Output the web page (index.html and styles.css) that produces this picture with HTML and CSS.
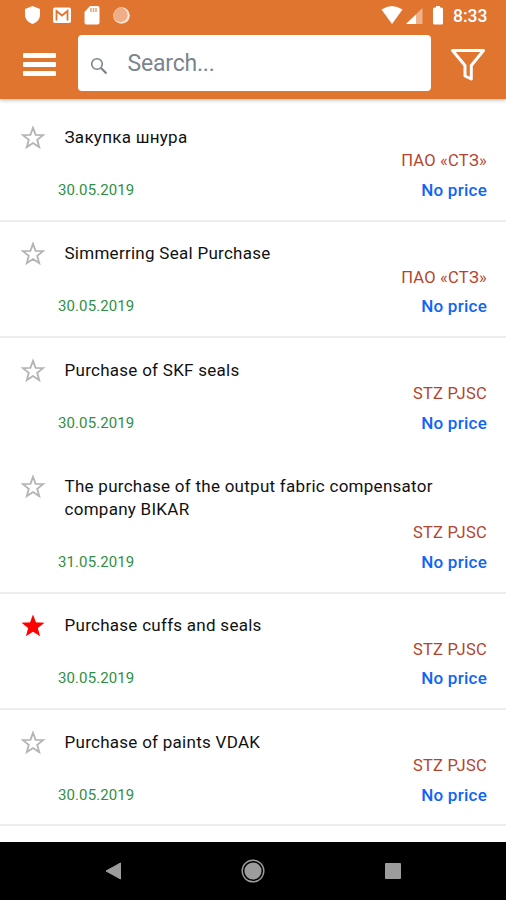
FILE: index.html
```
<!DOCTYPE html>
<html lang="en">
<head>
  <meta charset="UTF-8">
  <meta name="viewport" content="width=device-width, initial-scale=1.0">
  <title>Purchases</title>
  <link rel="stylesheet" href="styles.css">
</head>
<body>

<!-- Shared star shape -->
<svg class="defs" width="0" height="0">
  <symbol id="star" viewBox="0 0 24 24">
    <path d="M12 2.700L14.400 9.100L21.300 9.400L15.900 13.700L17.700 20.400L12 16.600L6.300 20.400L8.100 13.700L2.700 9.400L9.600 9.100z"/>
  </symbol>
</svg>

<div class="app">
  <header class="header">
    <!-- Status bar -->
    <div class="status">
      <svg class="notifications" width="110" height="30" viewBox="0 0 110 30">
        <path fill="#fff" d="M12.500 6l7.500 3v5.500c0 4.500-3 8-7.500 9.500-4.500-1.500-7.500-5-7.500-9.500V9z"/>
        <rect x="33" y="7.500" width="18" height="15.500" rx="2" fill="#fff"/>
        <path fill="none" stroke="#e07530" stroke-width="1.800" d="M36.500 20.500V11l5.500 4.500 5.500-4.500v9.500"/>
        <path fill="#fff" d="M70 6h7.500q2 0 2 2v14.500q0 2-2 2h-11q-2 0-2-2V12z"/>
        <path stroke="#e8a06e" stroke-width="1.500" d="M71 8v4M73.500 8v4M76 8v4"/>
        <circle cx="101.500" cy="15.500" r="8.300" fill="#fbe6d9"/>
        <circle cx="100.500" cy="15" r="7.200" fill="#efae88"/>
      </svg>
      <svg class="signals" width="66" height="30" viewBox="0 0 66 30">
        <path fill="#fff" d="M1.500 9.500Q12 2.500 22.500 9.500L12 24z"/>
        <path fill="#efb28c" d="M42.500 8v16H26z"/>
        <path fill="#fff" d="M36 14.500V24H26z"/>
        <path fill="#fff" d="M56 6h4v1.500h1.500q1.500 0 1.500 1.500v14q0 1.500-1.500 1.500h-7q-1.500 0-1.500-1.500V9q0-1.500 1.500-1.500H56z"/>
      </svg>
      <span class="clock">8:33</span>
    </div>
    <!-- Search bar -->
    <div class="toolbar">
      <div class="menu"><span></span><span></span><span></span></div>
      <div class="search">
        <svg width="18" height="18" viewBox="0 0 18 18" fill="none" stroke="#7a838b">
          <circle cx="7" cy="7" r="5.300" stroke-width="1.600"/>
          <path stroke-width="2.200" d="M11 11l5.500 5.500"/>
        </svg>
        <span class="placeholder">Search...</span>
      </div>
      <svg class="filter" width="36" height="34" viewBox="0 0 36 34" fill="none" stroke="#fff" stroke-width="3" stroke-linejoin="round">
        <path d="M2.500 2.500h31L21.300 17.500v13.500l-6.300-3v-10.500z"/>
      </svg>
    </div>
  </header>

  <!-- Purchase list -->
  <main class="list">
    <div class="item">
      <svg class="star"><use href="#star"/></svg>
      <div class="title">Закупка шнура</div>
      <div class="company">ПАО «СТЗ»</div>
      <div class="date">30.05.2019</div>
      <div class="price">No price</div>
    </div>
    <div class="item">
      <svg class="star"><use href="#star"/></svg>
      <div class="title">Simmerring Seal Purchase</div>
      <div class="company">ПАО «СТЗ»</div>
      <div class="date">30.05.2019</div>
      <div class="price">No price</div>
    </div>
    <div class="item no-line">
      <svg class="star"><use href="#star"/></svg>
      <div class="title">Purchase of SKF seals</div>
      <div class="company">STZ PJSC</div>
      <div class="date">30.05.2019</div>
      <div class="price">No price</div>
    </div>
    <div class="item">
      <svg class="star"><use href="#star"/></svg>
      <div class="title">The purchase of the output fabric compensator company BIKAR</div>
      <div class="company">STZ PJSC</div>
      <div class="date">31.05.2019</div>
      <div class="price">No price</div>
    </div>
    <div class="item">
      <svg class="star active"><use href="#star"/></svg>
      <div class="title">Purchase cuffs and seals</div>
      <div class="company">STZ PJSC</div>
      <div class="date">30.05.2019</div>
      <div class="price">No price</div>
    </div>
    <div class="item">
      <svg class="star"><use href="#star"/></svg>
      <div class="title">Purchase of paints VDAK</div>
      <div class="company">STZ PJSC</div>
      <div class="date">30.05.2019</div>
      <div class="price">No price</div>
    </div>
  </main>

  <!-- System navigation -->
  <nav class="navbar">
    <svg width="24" height="24" viewBox="0 0 24 24"><path fill="#9c9c9c" stroke="#9c9c9c" stroke-linejoin="round" d="M5 12L19.500 4v16z"/></svg>
    <svg width="24" height="24" viewBox="0 0 24 24"><circle cx="12" cy="12" r="10.800" fill="none" stroke="#9c9c9c" stroke-width="1.400"/><circle cx="12" cy="12" r="8.600" fill="#9c9c9c"/></svg>
    <svg width="24" height="24" viewBox="0 0 24 24"><rect x="4" y="4" width="16" height="16" rx="1" fill="#9c9c9c"/></svg>
  </nav>
</div>

</body>
</html>
```
FILE: styles.css
```
/* Global Styling */
body {
  margin: 0;
  font-family: Roboto, sans-serif;
  background: #fff;
}
.defs {
  display: block;
}
.app {
  display: flex;
  flex-direction: column;
  height: 900px;
  overflow: hidden;
}
/* Header */
.header {
  height: 98.5px;
  flex: none;
  background: #e07530;
  box-shadow: 0 1px 4px rgba(0, 0, 0, 0.3);
}
.status {
  display: flex;
  height: 30px;
  padding: 0 19px 0 20px;
}
.signals {
  margin-left: auto;
}
.clock {
  width: 34px;
  margin-left: 7px;
  font-size: 17.5px;
  font-weight: 500;
  line-height: 32px;
  color: #fff;
  white-space: nowrap;
}
.toolbar {
  display: flex;
  align-items: center;
  height: 66px;
  padding: 0 20px 0 23px;
}
.menu {
  display: flex;
  flex-direction: column;
  gap: 4px;
  width: 33px;
  padding-top: 3px;
}
.menu span {
  height: 5px;
  border-radius: 1px;
  background: #fff;
}
.search {
  display: flex;
  align-items: center;
  box-sizing: border-box;
  width: 353px;
  height: 56px;
  margin: 0 20px 0 22px;
  padding-left: 12px;
  border-radius: 4px;
  background: #fff;
}
.search svg {
  margin-top: 5px;
}
.placeholder {
  margin-left: 19.5px;
  font-size: 23px;
  letter-spacing: -0.2px;
  color: #7b858e;
}
.filter {
  flex: none;
  margin-top: 4px;
  margin-left: -1px;
}
/* List */
.list {
  flex: 1;
  min-height: 0;
  padding-top: 7px;
}
.item {
  display: grid;
  grid-template-columns: 64.5px 1fr auto;
  box-sizing: border-box;
  padding: 20.5px 19px 14.9px 0;
  border-bottom: 2px solid #ededed;
}
.item.no-line {
  border-bottom-color: transparent;
}
.star {
  width: 26px;
  height: 26px;
  margin: -1px 0 -10px 19.5px;
  fill: none;
  stroke: #b4b4b4;
  stroke-width: 1.7;
}
.star.active {
  fill: #f00;
  stroke: #f00;
  stroke-width: 1;
}
.title {
  grid-column: 2 / 4;
  padding-right: 40px;
  font-size: 17px;
  line-height: 23.2px;
  letter-spacing: 0.27px;
  color: #111;
}
.company {
  grid-column: 1 / 4;
  text-align: right;
  font-size: 16.5px;
  line-height: 23.2px;
  letter-spacing: 0.25px;
  color: #b5442e;
}
.date {
  grid-column: 1 / 3;
  padding: 2.5px 0 0 58px;
  font-size: 15px;
  line-height: 30px;
  letter-spacing: 0.1px;
  color: #2f8f43;
}
.price {
  padding-top: 2.5px;
  font-size: 17px;
  font-weight: 500;
  line-height: 30px;
  letter-spacing: 0.25px;
  color: #0f65f8;
}
/* System navigation */
.navbar {
  display: flex;
  flex: none;
  justify-content: center;
  align-items: center;
  gap: 116px;
  height: 58px;
  background: #000;
}
```
